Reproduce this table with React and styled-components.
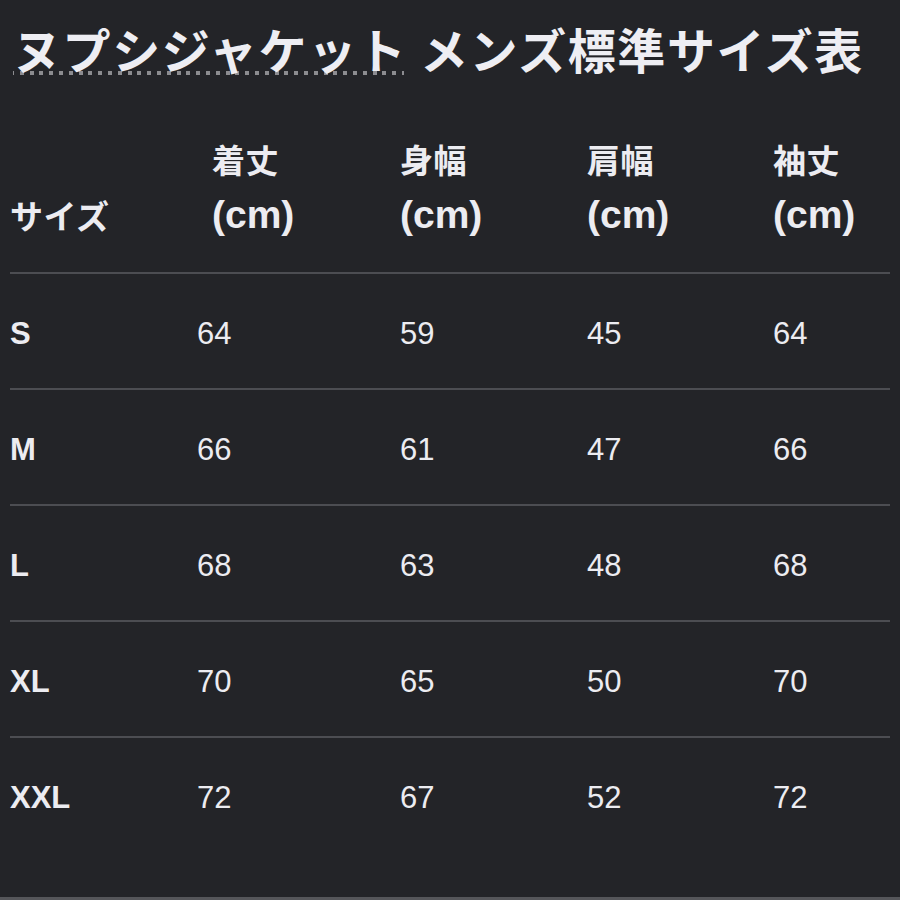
import styled, { createGlobalStyle } from "styled-components";

const GlobalStyle = createGlobalStyle`
  html, body {
    margin: 0;
    padding: 0;
    background: #232428;
  }
  body {
    color: #ececf1;
    font-family: "Liberation Sans", "Noto Sans CJK JP", sans-serif;
  }
`;

const sizes = [
  { size: "S", values: [64, 59, 45, 64] },
  { size: "M", values: [66, 61, 47, 66] },
  { size: "L", values: [68, 63, 48, 68] },
  { size: "XL", values: [70, 65, 50, 70] },
  { size: "XXL", values: [72, 67, 52, 72] },
];

const columns = [
  { name: "着丈", offset: 15 },
  { name: "身幅", offset: 0 },
  { name: "肩幅", offset: 0 },
  { name: "袖丈", offset: 0 },
];

const Page = styled.div`
  width: 900px;
  height: 900px;
  overflow: hidden;
  background: #232428;
  box-sizing: border-box;
  padding: 18px 10px 0 10px;
`;

const Title = styled.h1`
  margin: 0 0 0 3px;
  font-family: "Noto Sans CJK JP", sans-serif;
  font-weight: 700;
  font-size: 48px;
  line-height: 60px;
  letter-spacing: 1.6px;
  color: #eeeef3;
  white-space: nowrap;
`;

const Dotted = styled.span`
  background-image: repeating-linear-gradient(
    to right,
    #8c8c90 0,
    #8c8c90 4px,
    transparent 4px,
    transparent 9.8px
  );
  background-size: 100% 4px;
  background-repeat: no-repeat;
  background-position: -3px calc(100% - 8px);
`;

const Table = styled.div`
  margin-top: 53px;
  display: grid;
  grid-template-columns: 187px 203px 187px 186px 1fr;
  width: 880px;
`;

const HeaderCell = styled.div`
  display: flex;
  flex-direction: column;
  justify-content: flex-end;
  padding: 0 0 29px ${(p) => p.$offset || 0}px;
  border-bottom: 2px solid #4c4d52;
  font-weight: 700;
`;

const HeaderJa = styled.div`
  font-family: "Noto Sans CJK JP", sans-serif;
  font-size: 33px;
  line-height: 56px;
  letter-spacing: 0.5px;
`;

const HeaderUnit = styled.div`
  font-family: "Liberation Sans", sans-serif;
  font-size: 39px;
  line-height: 56px;
`;

const Cell = styled.div`
  height: 116px;
  display: flex;
  align-items: center;
  padding-top: 6px;
  box-sizing: border-box;
  border-bottom: 2px solid ${(p) => (p.$last ? "transparent" : "#4c4d52")};
  font-family: "Liberation Sans", sans-serif;
  font-size: 31px;
  font-weight: ${(p) => (p.$bold ? 700 : 400)};
  color: #ececf1;
`;

const Footer = styled.div`
  margin: 43px -10px 0;
  border-top: 3px solid #55565a;
`;

export default function App() {
  return (
    <Page>
      <GlobalStyle />
      <Title>
        <Dotted>ヌプシジャケット</Dotted> メンズ標準サイズ表
      </Title>
      <Table>
        <HeaderCell>
          <HeaderJa>サイズ</HeaderJa>
        </HeaderCell>
        {columns.map((c) => (
          <HeaderCell key={c.name} $offset={c.offset}>
            <HeaderJa>{c.name}</HeaderJa>
            <HeaderUnit>(cm)</HeaderUnit>
          </HeaderCell>
        ))}
        {sizes.map((row, r) => {
          const last = r === sizes.length - 1;
          return [
            <Cell key={row.size} $bold $last={last}>
              {row.size}
            </Cell>,
            ...row.values.map((v, i) => (
              <Cell key={row.size + i} $last={last}>
                {v}
              </Cell>
            )),
          ];
        })}
      </Table>
      <Footer />
    </Page>
  );
}
